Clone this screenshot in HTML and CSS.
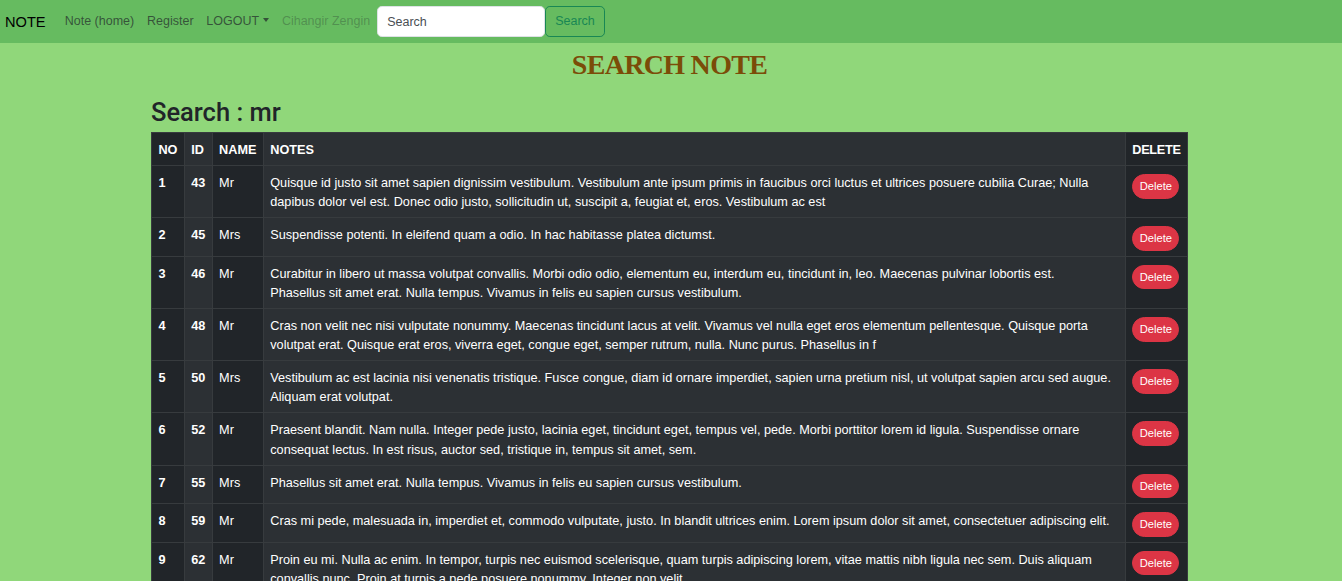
FILE: index.html
```html
<!DOCTYPE html>
<html lang="en">
<head>
<meta charset="utf-8">
<title>Search Note</title>
<link rel="stylesheet" href="styles.css">
</head>
<body>
<nav class="navbar">
  <a class="brand" href="#">NOTE</a>
  <ul class="nav-links">
    <li><a class="nav-link" href="#">Note (home)</a></li>
    <li><a class="nav-link" href="#">Register</a></li>
    <li><a class="nav-link dropdown-toggle" href="#">LOGOUT</a></li>
    <li><span class="nav-link disabled">Cihangir Zengin</span></li>
  </ul>
  <form class="search-form">
    <input class="search-input" type="search" placeholder="Search" aria-label="Search">
    <button class="btn-outline" type="button">Search</button>
  </form>
</nav>

<main class="container">
  <h2 class="page-title">SEARCH NOTE</h2>
  <h3 class="search-title">Search : mr</h3>
  <table class="notes-table">
    <thead>
      <tr><th>NO</th><th>ID</th><th>NAME</th><th>NOTES</th><th class="col-delete">DELETE</th></tr>
    </thead>
    <tbody>
      <tr><th>1</th><th>43</th><td>Mr</td><td>Quisque id justo sit amet sapien dignissim vestibulum. Vestibulum ante ipsum primis in faucibus orci luctus et ultrices posuere cubilia Curae; Nulla dapibus dolor vel est. Donec odio justo, sollicitudin ut, suscipit a, feugiat et, eros. Vestibulum ac est</td><td><button class="btn-delete" type="button">Delete</button></td></tr>
      <tr><th>2</th><th>45</th><td>Mrs</td><td>Suspendisse potenti. In eleifend quam a odio. In hac habitasse platea dictumst.</td><td><button class="btn-delete" type="button">Delete</button></td></tr>
      <tr><th>3</th><th>46</th><td>Mr</td><td>Curabitur in libero ut massa volutpat convallis. Morbi odio odio, elementum eu, interdum eu, tincidunt in, leo. Maecenas pulvinar lobortis est.<br>Phasellus sit amet erat. Nulla tempus. Vivamus in felis eu sapien cursus vestibulum.</td><td><button class="btn-delete" type="button">Delete</button></td></tr>
      <tr><th>4</th><th>48</th><td>Mr</td><td>Cras non velit nec nisi vulputate nonummy. Maecenas tincidunt lacus at velit. Vivamus vel nulla eget eros elementum pellentesque. Quisque porta volutpat erat. Quisque erat eros, viverra eget, congue eget, semper rutrum, nulla. Nunc purus. Phasellus in f</td><td><button class="btn-delete" type="button">Delete</button></td></tr>
      <tr><th>5</th><th>50</th><td>Mrs</td><td>Vestibulum ac est lacinia nisi venenatis tristique. Fusce congue, diam id ornare imperdiet, sapien urna pretium nisl, ut volutpat sapien arcu sed augue. Aliquam erat volutpat.</td><td><button class="btn-delete" type="button">Delete</button></td></tr>
      <tr><th>6</th><th>52</th><td>Mr</td><td>Praesent blandit. Nam nulla. Integer pede justo, lacinia eget, tincidunt eget, tempus vel, pede. Morbi porttitor lorem id ligula. Suspendisse ornare consequat lectus. In est risus, auctor sed, tristique in, tempus sit amet, sem.</td><td><button class="btn-delete" type="button">Delete</button></td></tr>
      <tr><th>7</th><th>55</th><td>Mrs</td><td>Phasellus sit amet erat. Nulla tempus. Vivamus in felis eu sapien cursus vestibulum.</td><td><button class="btn-delete" type="button">Delete</button></td></tr>
      <tr><th>8</th><th>59</th><td>Mr</td><td>Cras mi pede, malesuada in, imperdiet et, commodo vulputate, justo. In blandit ultrices enim. Lorem ipsum dolor sit amet, consectetuer adipiscing elit.</td><td><button class="btn-delete" type="button">Delete</button></td></tr>
      <tr><th>9</th><th>62</th><td>Mr</td><td>Proin eu mi. Nulla ac enim. In tempor, turpis nec euismod scelerisque, quam turpis adipiscing lorem, vitae mattis nibh ligula nec sem. Duis aliquam convallis nunc. Proin at turpis a pede posuere nonummy. Integer non velit.</td><td><button class="btn-delete" type="button">Delete</button></td></tr>
    </tbody>
  </table>
</main>
</body>
</html>
```

FILE: styles.css
```css
* { box-sizing: border-box; }

body {
  margin: 0;
  background: #90d77a;
  color: #212529;
  font-family: "Liberation Sans", Arial, sans-serif;
  font-size: 12.7px;
  line-height: 19.2px;
}

/* Navbar */
.navbar {
  display: flex;
  align-items: center;
  height: 43px;
  padding: 0 5px;
  background: #66bb60;
}

.brand {
  font-size: 14.6px;
  line-height: 24px;
  color: #000;
  text-decoration: none;
  margin-right: 12.8px;
}

.nav-links {
  display: flex;
  list-style: none;
  margin: 0;
  padding: 0;
}

.nav-link {
  display: block;
  padding: 6.4px 6.4px;
  font-size: 12.5px;
  color: rgba(33, 37, 41, 0.7);
  text-decoration: none;
}

.nav-link.disabled { color: rgba(33, 37, 41, 0.3); }

.dropdown-toggle::after {
  content: "";
  display: inline-block;
  margin-left: 4px;
  vertical-align: 3px;
  border-top: 4px solid;
  border-right: 3.5px solid transparent;
  border-left: 3.5px solid transparent;
}

.search-form {
  display: flex;
  align-items: center;
}

.search-input {
  width: 168px;
  height: 31px;
  padding: 4.8px 9.6px;
  font: inherit;
  font-size: 12.5px;
  color: #212529;
  background: #fff;
  border: 1px solid #dee2e6;
  border-radius: 4.8px;
  outline: none;
}

.search-input::placeholder { color: #4a4f54; opacity: 1; }

.btn-outline {
  height: 31px;
  padding: 4.8px 9.6px;
  font: inherit;
  font-size: 12.5px;
  color: #198754;
  background: transparent;
  border: 1px solid #198754;
  border-radius: 4.8px;
}

/* Content */
.container {
  width: 1037px;
  margin: 0 0 0 calc(50% - 520px);
}

.page-title {
  margin: 5px 0 17px;
  text-align: center;
  font-family: "Liberation Serif", "Times New Roman", serif;
  font-size: 28px;
  line-height: 33.6px;
  letter-spacing: -0.7px;
  font-weight: 700;
  color: #7b4c08;
}

.search-title {
  margin: 0 0 6.4px;
  font-family: Roboto, "Liberation Sans", sans-serif;
  font-size: 25.5px;
  line-height: 26.9px;
  font-weight: 500;
  color: #212529;
}

.notes-table {
  width: 100%;
  border-collapse: collapse;
  color: #fff;
  background: #212529;
}

.notes-table th,
.notes-table td {
  padding: 8px 6.4px 4.8px;
  border: 1px solid #373b3e;
  text-align: left;
  vertical-align: top;
}

.notes-table th { font-weight: 700; }

.notes-table .col-delete { letter-spacing: -0.3px; }

.notes-table tr > :nth-child(even) { background: #2c3034; }

.btn-delete {
  display: block;
  padding: 3px 6.4px;
  font: inherit;
  font-size: 11.2px;
  line-height: 16.8px;
  color: #fff;
  background: #dc3545;
  border: 1px solid #dc3545;
  border-radius: 50px;
}
```
